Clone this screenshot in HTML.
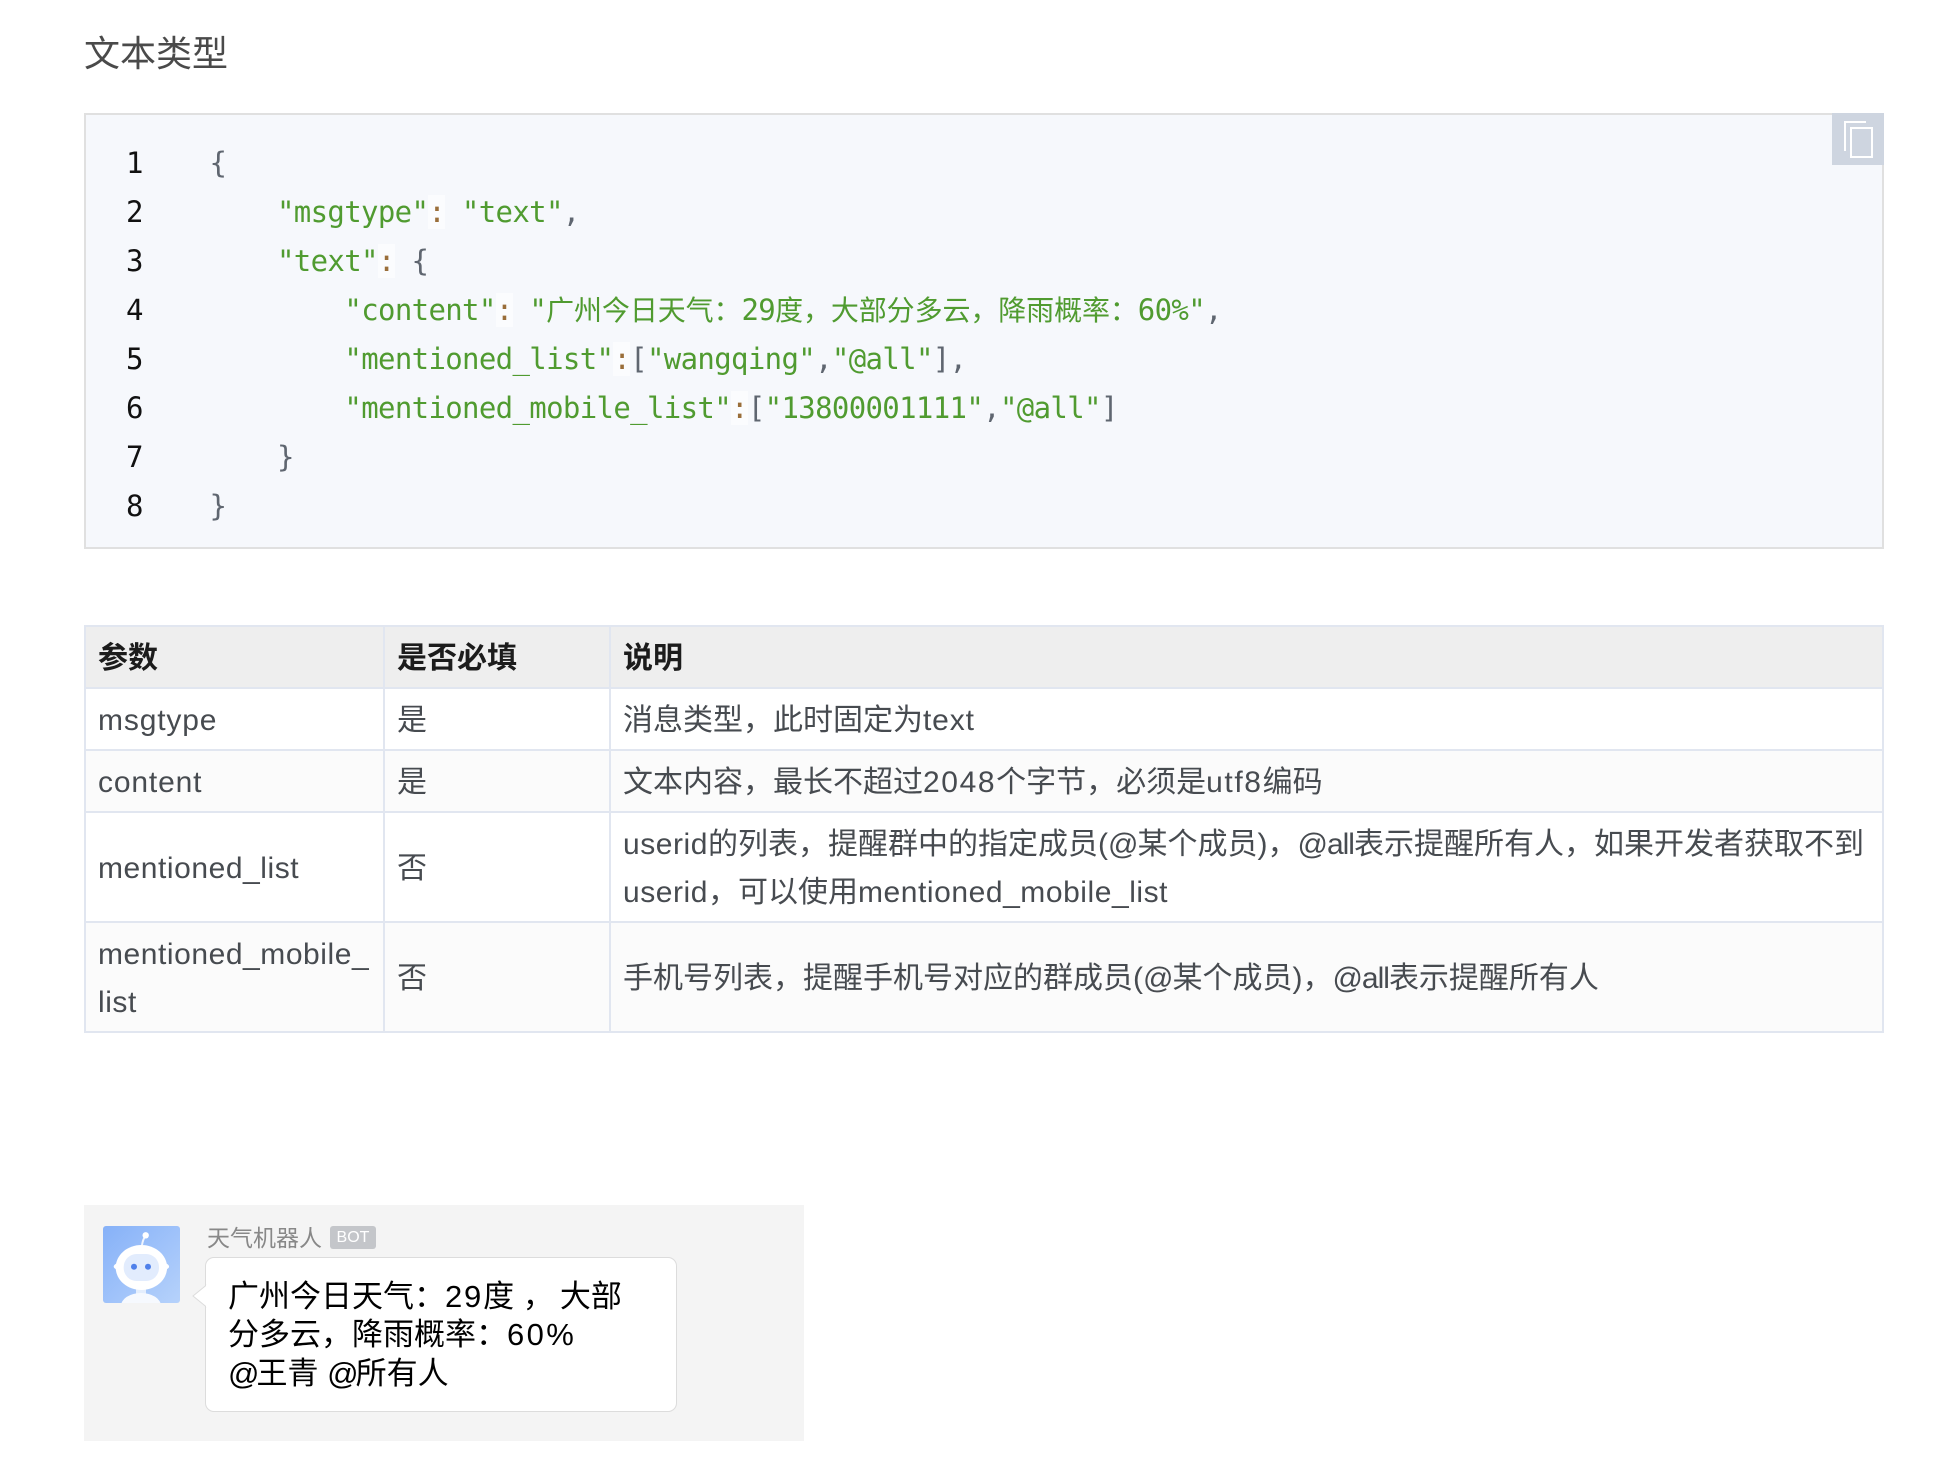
<!DOCTYPE html>
<html lang="zh">
<head>
<meta charset="utf-8">
<title>文本类型</title>
<style>
html,body{margin:0;padding:0;background:#fff;}
body{position:relative;width:1948px;height:1484px;overflow:hidden;font-family:"Liberation Sans","Noto Sans CJK SC",sans-serif;}
.abs{position:absolute;}
.title{left:84px;top:27.5px;font-size:36px;line-height:52px;color:#4a4a4a;white-space:nowrap;}
.code{left:84px;top:113px;width:1796px;height:432px;border:2px solid #e0e0e0;background:#f6f8fc;}
.ln,.cl{position:absolute;font-family:"DejaVu Sans Mono","Noto Sans CJK SC",monospace;font-size:29px;letter-spacing:-.65px;line-height:49px;height:49px;white-space:pre;}
.ln{left:126px;color:#111;}
.cl{color:#5f6670;}
.s{color:#509b30;}
.c{font-size:28px;letter-spacing:-.1px;}
.o{color:#9a6e3a;background:rgba(255,255,255,.6);}
.copy{left:1832px;top:113px;width:52px;height:52px;background:#ced5e0;}
table{position:absolute;left:84px;top:625px;width:1798px;height:406px;border-collapse:collapse;table-layout:fixed;font-size:30px;line-height:48px;color:#474b50;}
td,th{border:2px solid #e1e6f0;padding:7.5px 12px 4.5px;white-space:nowrap;text-align:left;vertical-align:middle;}
th{background:#eee;color:#1c1c1c;font-weight:700;}
tr.e td{background:#fbfbfb;}
.l{letter-spacing:.55px;}
.l2{letter-spacing:.85px;}
.d{letter-spacing:1.6px;}
.d3{letter-spacing:2.4px;}
.at{letter-spacing:-1px;}
.chat{left:84px;top:1205px;width:720px;height:236px;background:#f4f4f4;}
.av{left:103px;top:1226px;width:77px;height:77px;}
.nm{left:207px;top:1222px;font-size:23px;line-height:32px;color:#888;white-space:nowrap;}
.bot{left:330px;top:1226px;width:46px;height:23px;background:#c4c6ca;border-radius:3px;color:#fff;font-size:16px;line-height:23px;text-align:center;}
.bub{left:205px;top:1257px;width:470px;height:153px;background:#fff;border:1px solid #dcdcdc;border-radius:9px;box-sizing:content-box;}
.arr{left:192px;top:1284px;}
.bt{left:228px;top:1278px;font-size:31px;line-height:38.3px;color:#000;white-space:nowrap;}
.n{letter-spacing:1.8px;}
.a2{letter-spacing:-3px;}
.sp{letter-spacing:-2.5px;}
</style>
</head>
<body>
<div class="abs title">文本类型</div>

<div class="abs code"></div>
<div class="ln" style="top:139px">1</div>
<div class="ln" style="top:188px">2</div>
<div class="ln" style="top:237px">3</div>
<div class="ln" style="top:286px">4</div>
<div class="ln" style="top:335px">5</div>
<div class="ln" style="top:384px">6</div>
<div class="ln" style="top:433px">7</div>
<div class="ln" style="top:482px">8</div>

<div class="cl" style="left:209.5px;top:139px">{</div>
<div class="cl" style="left:277px;top:188px"><span class="s">"msgtype"</span><span class="o">:</span> <span class="s">"text"</span>,</div>
<div class="cl" style="left:277px;top:237px"><span class="s">"text"</span><span class="o">:</span> {</div>
<div class="cl" style="left:344.4px;top:286px"><span class="s">"content"</span><span class="o">:</span> <span class="s">"<span class="c">广州今日天气：</span>29<span class="c">度，大部分多云，降雨概率：</span>60%"</span>,</div>
<div class="cl" style="left:344.4px;top:335px"><span class="s">"mentioned_list"</span><span class="o">:</span>[<span class="s">"wangqing"</span>,<span class="s">"@all"</span>],</div>
<div class="cl" style="left:344.4px;top:384px"><span class="s">"mentioned_mobile_list"</span><span class="o">:</span>[<span class="s">"13800001111"</span>,<span class="s">"@all"</span>]</div>
<div class="cl" style="left:277px;top:433px">}</div>
<div class="cl" style="left:209.5px;top:482px">}</div>

<div class="abs copy">
<svg width="52" height="52" viewBox="0 0 52 52" style="display:block">
<path d="M13 38V9H34" fill="none" stroke="#fff" stroke-width="2"/>
<rect x="19" y="15" width="21" height="29" fill="none" stroke="#fff" stroke-width="2"/>
</svg>
</div>

<table>
<colgroup><col style="width:299px"><col style="width:226px"><col style="width:1273px"></colgroup>
<tr style="height:62px"><th>参数</th><th>是否必填</th><th>说明</th></tr>
<tr style="height:62px"><td><span class="l2">msgtype</span></td><td>是</td><td>消息类型，此时固定为<span class="l2">text</span></td></tr>
<tr class="e" style="height:62px"><td><span class="l2">content</span></td><td>是</td><td>文本内容，最长不超过<span class="d">2048</span>个字节，必须是<span class="d">utf8</span>编码</td></tr>
<tr style="height:110px"><td><span class="l">mentioned_list</span></td><td>否</td><td><span class="l">userid</span>的列表，提醒群中的指定成员(<span class="at">@</span>某个成员)，<span class="at">@all</span>表示提醒所有人，如果开发者获取不到<br><span class="l">userid</span>，可以使用<span class="l">mentioned_mobile_list</span></td></tr>
<tr class="e" style="height:110px"><td><span class="l">mentioned_mobile_<br>list</span></td><td>否</td><td>手机号列表，提醒手机号对应的群成员(<span class="at">@</span>某个成员)，<span class="at">@all</span>表示提醒所有人</td></tr>
</table>

<div class="abs chat"></div>
<div class="abs av">
<svg width="77" height="77" viewBox="0 0 77 77" style="display:block">
<defs>
<linearGradient id="g" x1="0" y1="0" x2="1" y2="1"><stop offset="0" stop-color="#86b1f8"/><stop offset="1" stop-color="#b6d2fb"/></linearGradient>
<clipPath id="c"><rect width="77" height="77" rx="3"/></clipPath>
</defs>
<g clip-path="url(#c)">
<rect width="77" height="77" fill="url(#g)"/>
<path d="M39 19Q40 13 42.5 10" stroke="#fff" stroke-width="2" fill="none" opacity=".85"/>
<circle cx="42.7" cy="9.3" r="3.2" fill="#fff"/>
<rect x="33" y="60" width="10" height="9" fill="#e4eefd"/>
<ellipse cx="38" cy="80" rx="20" ry="13" fill="#f6f9fe"/>
<ellipse cx="38.4" cy="40.5" rx="27.7" ry="7" fill="#fff"/>
<ellipse cx="38.4" cy="41.5" rx="25.7" ry="22.5" fill="#fff"/>
<rect x="20.7" y="28" width="35.3" height="27" rx="13" fill="#e2ecfd"/>
<circle cx="31" cy="40.7" r="3" fill="#4f80ea"/>
<circle cx="45" cy="40.7" r="3" fill="#4f80ea"/>
</g>
</svg>
</div>
<div class="abs nm">天气机器人</div>
<div class="abs bot">BOT</div>
<div class="abs bub"></div>
<svg class="abs arr" width="16" height="24" viewBox="0 0 16 24">
<path d="M14.5 1L1 12L14.5 23" fill="#fff" stroke="#dcdcdc" stroke-width="1"/>
<rect x="14" y="1" width="2" height="22" fill="#fff"/>
</svg>
<div class="abs bt">广州今日天气：<span class="n">29</span>度 ，<span class="sp"> </span>大部<br>分多云，降雨概率：<span class="d3">60%</span><br><span class="a2">@</span>王青 <span class="a2">@</span>所有人</div>
</body>
</html>
